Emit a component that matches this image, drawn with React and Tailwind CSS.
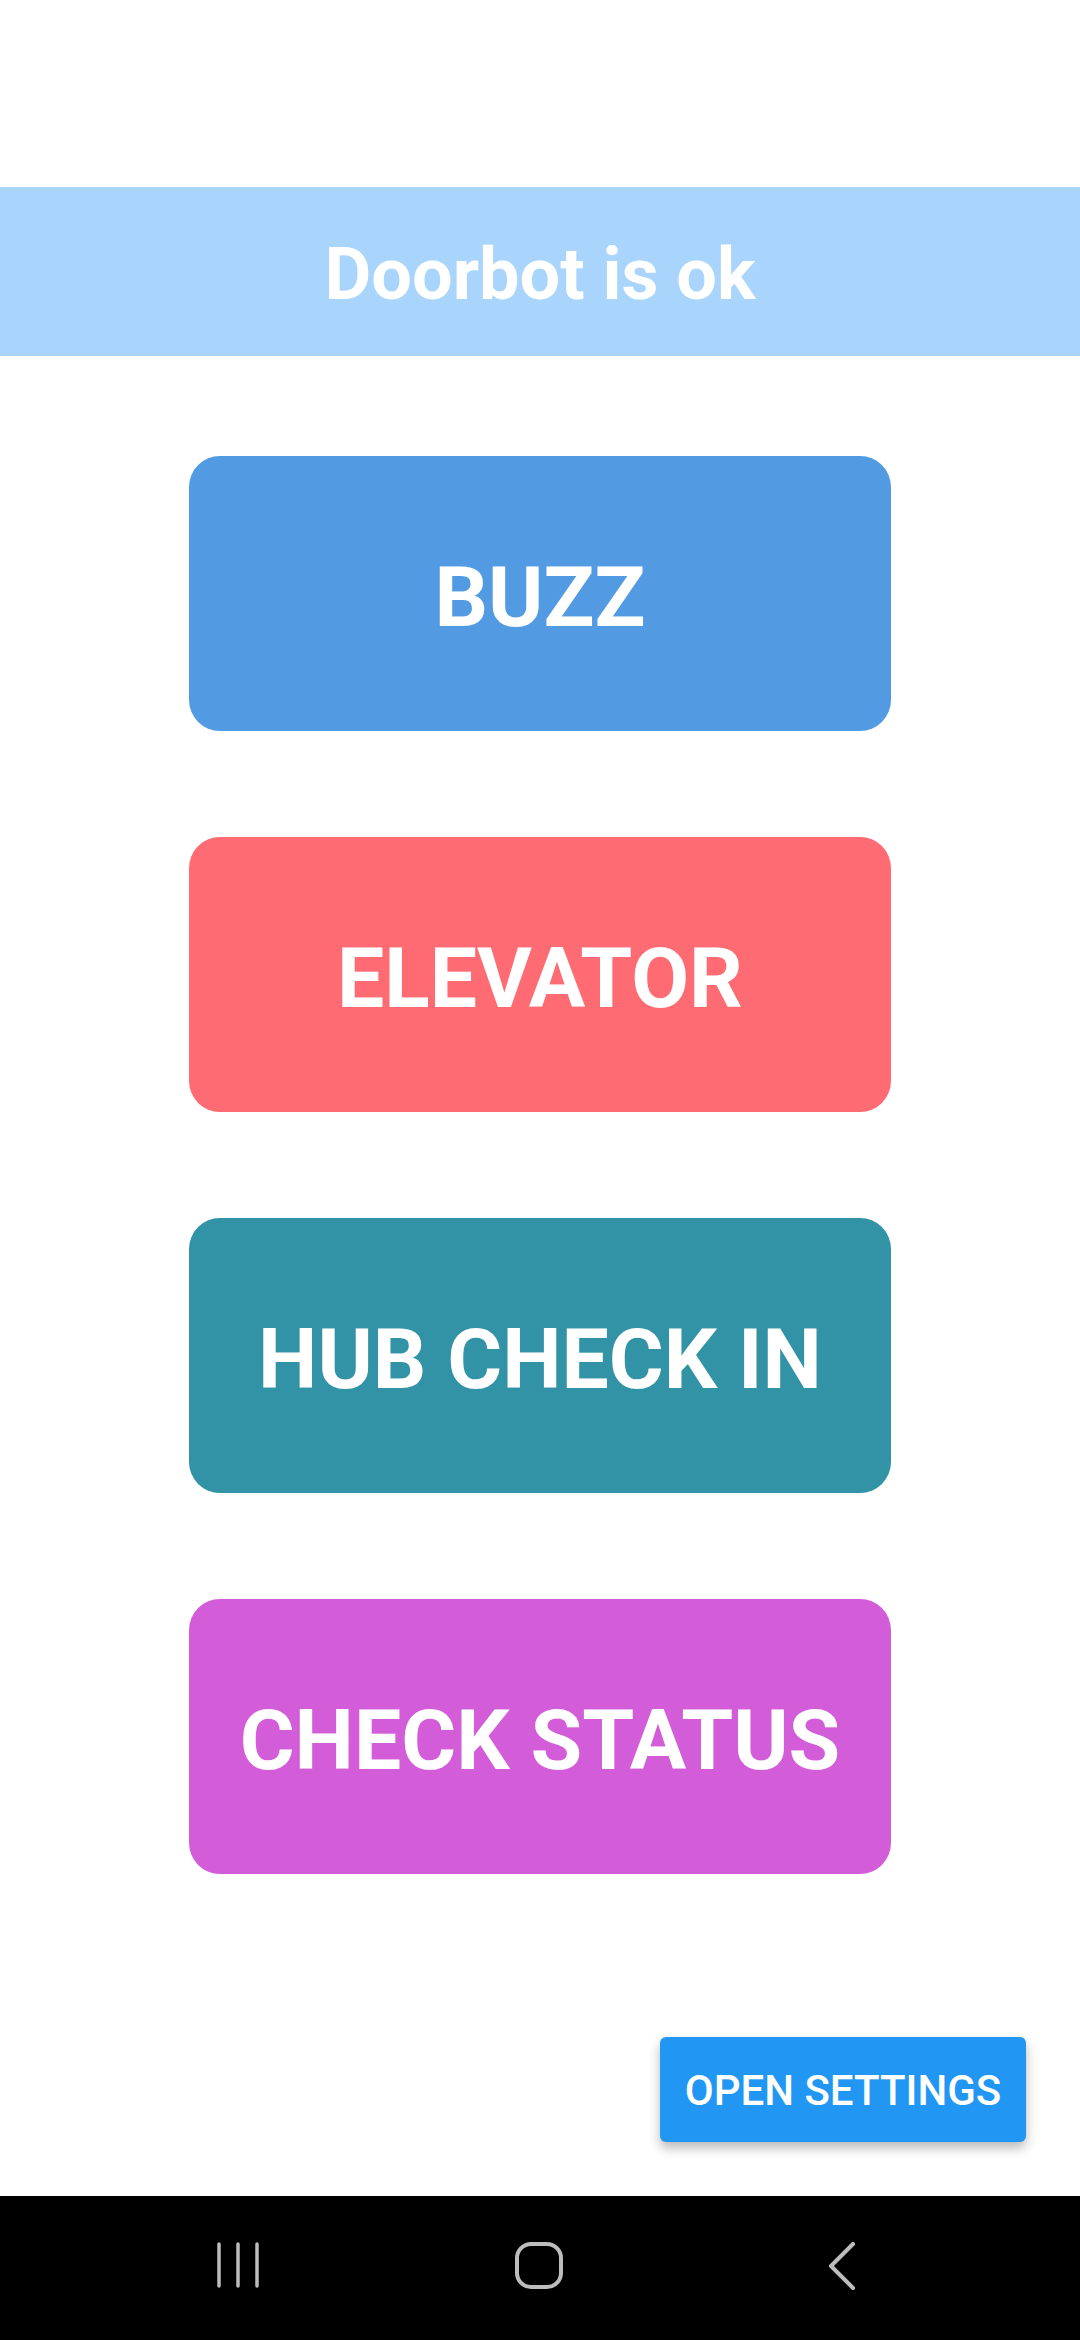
export default function App() {
  const font = { fontFamily: "Roboto, 'Noto Sans', sans-serif" };
  const buttons = [
    { label: "BUZZ", cls: "bg-[#529BE2]" },
    { label: "ELEVATOR", cls: "bg-[#FF6B73]" },
    { label: "HUB CHECK IN", cls: "bg-[#3193A5]" },
    { label: "CHECK STATUS", cls: "bg-[#D35DD8]" },
  ];
  return (
    <div className="w-[1080px] h-[2340px] bg-white flex flex-col" style={font}>
      <div className="h-[187px] shrink-0" />
      <div className="h-[169px] shrink-0 bg-[#A9D5FC] flex items-center justify-center pt-[6px]">
        <span className="text-white font-bold text-[72px] leading-none">Doorbot is ok</span>
      </div>
      <div className="flex flex-col items-center gap-[106px] mt-[100px]">
        {buttons.map((b) => (
          <div
            key={b.label}
            className={`w-[702px] h-[275px] rounded-[31px] ${b.cls} flex items-center justify-center pt-[8px]`}
          >
            <span className="text-white font-bold text-[84px] leading-none">{b.label}</span>
          </div>
        ))}
      </div>
      <div className="flex-1 flex items-end justify-end pr-[54px] pb-[54px]">
        <div className="w-[366px] h-[105px] rounded-[6px] bg-[#2196F3] flex items-center justify-center pt-[3px] shadow-[0_6px_12px_rgba(0,0,0,0.28)]">
          <span className="text-white font-medium text-[42px] leading-none">OPEN SETTINGS</span>
        </div>
      </div>
      <div className="h-[144px] shrink-0 bg-black flex items-start justify-center pt-[46px]">
        <div className="w-[100px] flex justify-center">
          <svg width="42" height="46" viewBox="0 0 42 46" fill="none" stroke="#BDBDBD" strokeWidth="3.5" strokeLinecap="round">
            <line x1="2" y1="2" x2="2" y2="44" />
            <line x1="21" y1="2" x2="21" y2="44" />
            <line x1="40" y1="2" x2="40" y2="44" />
          </svg>
        </div>
        <div className="w-[100px] flex justify-center ml-[201px]">
          <svg width="48" height="47" viewBox="0 0 48 47" fill="none" stroke="#BDBDBD" strokeWidth="4">
            <rect x="2" y="2" width="44" height="43" rx="14" />
          </svg>
        </div>
        <div className="w-[100px] flex justify-center ml-[203px]">
          <svg width="28" height="48" viewBox="0 0 28 48" fill="none" stroke="#BDBDBD" strokeWidth="4" strokeLinecap="round" strokeLinejoin="round">
            <polyline points="25,2 3,24 25,46" />
          </svg>
        </div>
      </div>
    </div>
  );
}
